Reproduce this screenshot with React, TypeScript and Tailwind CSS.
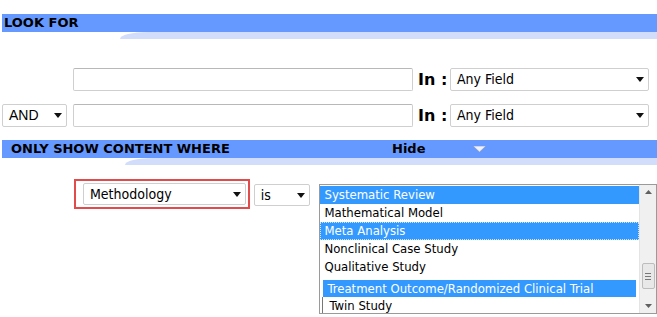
import React from "react";

const Arrow = () => (
  <svg width="8" height="5" viewBox="0 0 8 5" className="shrink-0">
    <path d="M0 0h8L4 5z" fill="#111" />
  </svg>
);

const FakeSelect = ({ label, className }: { label: string; className: string }) => (
  <div
    className={`flex items-center justify-between border border-[#cfcfcf] rounded-[2px] bg-white pl-[6px] pr-[4px] text-[14px] text-black ${className}`}
  >
    <span>{label}</span>
    <Arrow />
  </div>
);

const SectionBar = ({ title, children, curveLeft }: { title: string; children?: React.ReactNode; curveLeft: string }) => (
  <div className="flex flex-col">
    <div className="h-[18px] ml-[2px] bg-[#6699ff] flex items-center font-['DejaVu_Sans',sans-serif] font-bold text-[13px] text-black">
      {children ?? <span className="pl-[2px]">{title}</span>}
    </div>
    <div className={`h-[7px] bg-[#d2ddfc] rounded-tl-[28px_7px] ${curveLeft}`} />
  </div>
);

const options = [
  { label: "Systematic Review", sel: true },
  { label: "Mathematical Model" },
  { label: "Meta Analysis", sel: true, focus: true },
  { label: "Nonclinical Case Study" },
  { label: "Qualitative Study" },
];

const cond = "font-['DejaVu_Sans_Condensed','DejaVu_Sans',sans-serif]";

export default function App() {
  return (
    <div className="w-[657px] h-[317px] bg-white overflow-hidden pt-[14px] font-['DejaVu_Sans',sans-serif]">
      <SectionBar title="LOOK FOR" curveLeft="ml-[120px]" />

      <div className="mt-[29px] flex items-center h-[23px]">
        <div className="ml-[73px] w-[340px] h-[23px] border border-[#cfcfcf] border-t-[#b8b8b8] rounded-[2px]" />
        <span className="ml-[5px] w-[32px] font-bold text-[16px] text-black">In :</span>
        <FakeSelect label="Any Field" className={`w-[199px] h-[23px] ${cond}`} />
      </div>

      <div className="mt-[13px] flex items-center h-[23px]">
        <FakeSelect label="AND" className="ml-[2px] w-[65px] h-[23px] font-['Liberation_Sans',sans-serif]" />
        <div className="ml-[6px] w-[340px] h-[23px] border border-[#cfcfcf] border-t-[#b8b8b8] rounded-[2px]" />
        <span className="ml-[5px] w-[32px] font-bold text-[16px] text-black">In :</span>
        <FakeSelect label="Any Field" className={`w-[199px] h-[23px] ${cond}`} />
      </div>

      <div className="mt-[13px]">
        <SectionBar title="ONLY SHOW CONTENT WHERE" curveLeft="ml-[125px]">
          <span className="pl-[9px] w-[390px]">ONLY SHOW CONTENT WHERE</span>
          <span className="w-[81px]">Hide</span>
          <svg width="13" height="6" viewBox="0 0 13 6">
            <path d="M0 0h13L6.5 6z" fill="#eef2ff" stroke="#7f8fb0" strokeWidth="0.6" />
          </svg>
        </SectionBar>
      </div>

      <div className="mt-[19px] flex items-start">
        <div className="ml-[74px] mt-[-5px] w-[177px] h-[30px] border-2 border-[#e24b4b] flex items-center pl-[7px]">
          <FakeSelect label="Methodology" className={`w-[163px] h-[22px] ${cond}`} />
        </div>
        <FakeSelect label="is" className={`ml-[4px] w-[57px] h-[22px] ${cond}`} />
        <div className={`ml-[9px] w-[340px] h-[130px] border border-[#9a9a9a] flex text-[13px] ${cond}`}>
          <div className="flex-1 flex flex-col pt-[1px] overflow-hidden">
            {options.map((o) => (
              <div
                key={o.label}
                className={`h-[18px] leading-[18px] pl-[4px] whitespace-nowrap ${
                  o.sel ? "bg-[#3399ff] text-white" : "text-black"
                } ${o.focus ? "outline outline-1 outline-dotted outline-[#cfe4ff] -outline-offset-1" : ""}`}
              >
                {o.label}
              </div>
            ))}
            <div className="mt-[4px] ml-[3px] mr-[3px] h-[17px] leading-[17px] pl-[4px] bg-[#3399ff] text-white whitespace-nowrap">
              Treatment Outcome/Randomized Clinical Trial
            </div>
            <div className="h-[17px] leading-[17px] pl-[6px] text-black ml-[2px] border-l border-[#777]">Twin Study</div>
          </div>
          <div className="w-[17px] bg-[#f0f0f0] border-l border-[#e4e4e4] flex flex-col items-center py-[5px]">
            <svg width="7" height="4" viewBox="0 0 7 4">
              <path d="M0 4h7L3.5 0z" fill="#606060" />
            </svg>
            <div className="w-[13px] h-[26px] mt-[69px] bg-[#e8e8e8] border border-[#bcbcbc] rounded-[2px] flex flex-col items-center justify-center gap-[2px]">
              <div className="w-[6px] h-px bg-[#777]" />
              <div className="w-[6px] h-px bg-[#777]" />
              <div className="w-[6px] h-px bg-[#777]" />
            </div>
            <div className="flex-1" />
            <svg width="7" height="4" viewBox="0 0 7 4">
              <path d="M0 0h7L3.5 4z" fill="#606060" />
            </svg>
          </div>
        </div>
      </div>
    </div>
  );
}
